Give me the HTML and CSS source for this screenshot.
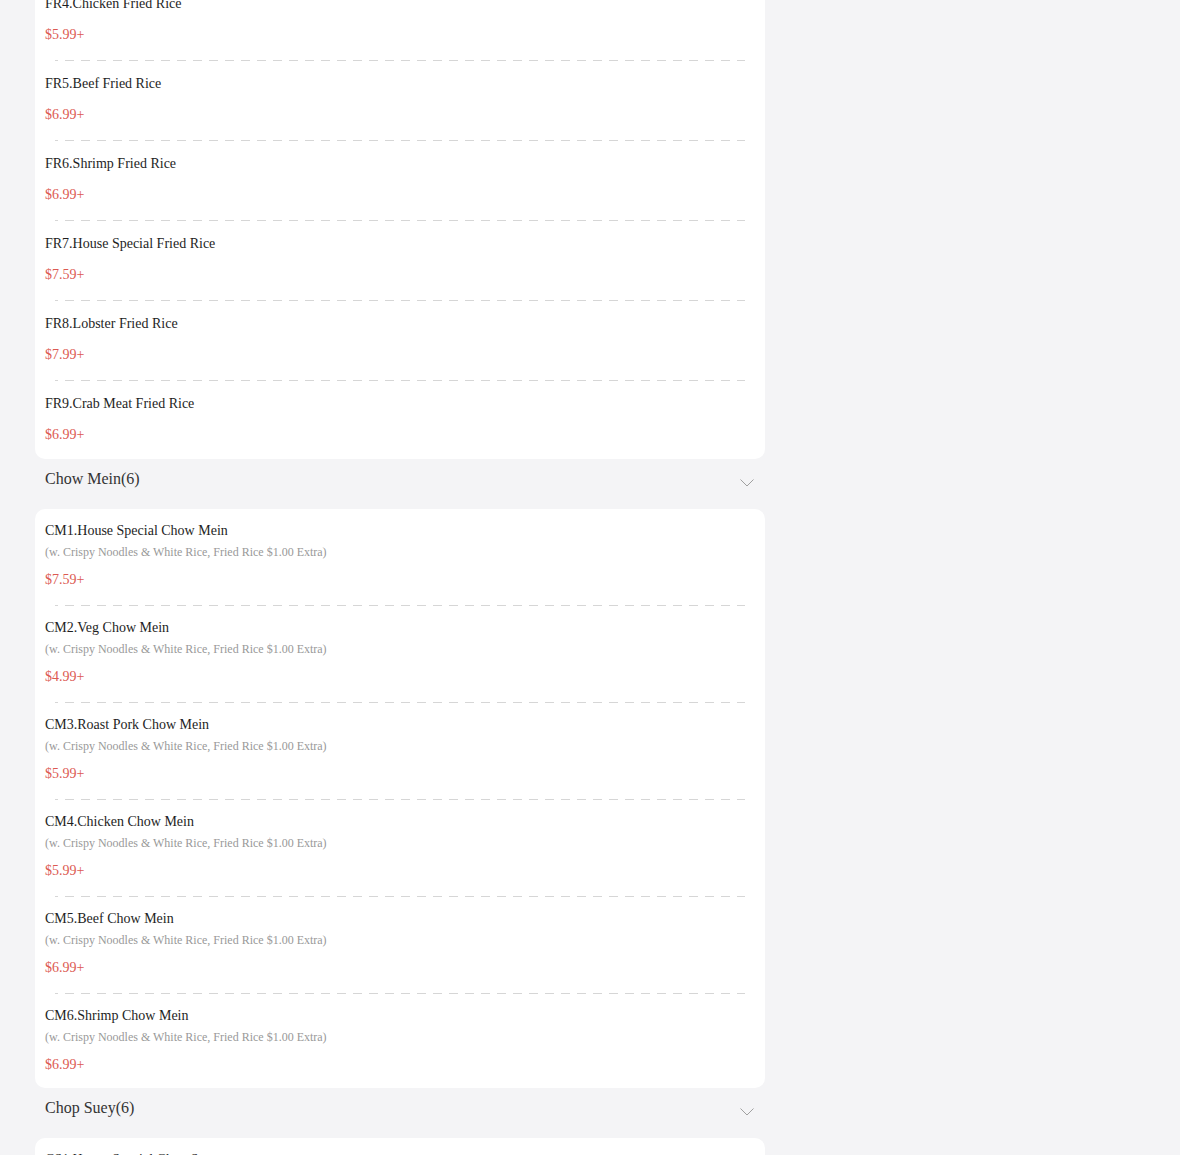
FILE: index.html
```html
<!DOCTYPE html>
<html lang="en">
<head>
<meta charset="utf-8">
<title>Menu</title>
<link rel="stylesheet" href="styles.css">
</head>
<body>
<main class="menu">
  <section class="card card-first">
    <div class="item"><div class="name">FR4.Chicken Fried Rice</div><div class="price">$5.99+</div></div>
    <div class="sep"></div>
    <div class="item"><div class="name">FR5.Beef Fried Rice</div><div class="price">$6.99+</div></div>
    <div class="sep"></div>
    <div class="item"><div class="name">FR6.Shrimp Fried Rice</div><div class="price">$6.99+</div></div>
    <div class="sep"></div>
    <div class="item"><div class="name">FR7.House Special Fried Rice</div><div class="price">$7.59+</div></div>
    <div class="sep"></div>
    <div class="item"><div class="name">FR8.Lobster Fried Rice</div><div class="price">$7.99+</div></div>
    <div class="sep"></div>
    <div class="item"><div class="name">FR9.Crab Meat Fried Rice</div><div class="price">$6.99+</div></div>
  </section>

  <div class="cat">
    <span class="cat-title">Chow Mein(6)</span>
    <svg class="chev" width="14" height="8" viewBox="0 0 14 8"><polyline points="0.5,0.5 7,7 13.5,0.5" fill="none" stroke="#a0a0a0" stroke-width="1"/></svg>
  </div>

  <section class="card">
    <div class="item desc-item"><div class="name">CM1.House Special Chow Mein</div><div class="desc">(w. Crispy Noodles &amp; White Rice, Fried Rice $1.00 Extra)</div><div class="price">$7.59+</div></div>
    <div class="sep"></div>
    <div class="item desc-item"><div class="name">CM2.Veg Chow Mein</div><div class="desc">(w. Crispy Noodles &amp; White Rice, Fried Rice $1.00 Extra)</div><div class="price">$4.99+</div></div>
    <div class="sep"></div>
    <div class="item desc-item"><div class="name">CM3.Roast Pork Chow Mein</div><div class="desc">(w. Crispy Noodles &amp; White Rice, Fried Rice $1.00 Extra)</div><div class="price">$5.99+</div></div>
    <div class="sep"></div>
    <div class="item desc-item"><div class="name">CM4.Chicken Chow Mein</div><div class="desc">(w. Crispy Noodles &amp; White Rice, Fried Rice $1.00 Extra)</div><div class="price">$5.99+</div></div>
    <div class="sep"></div>
    <div class="item desc-item"><div class="name">CM5.Beef Chow Mein</div><div class="desc">(w. Crispy Noodles &amp; White Rice, Fried Rice $1.00 Extra)</div><div class="price">$6.99+</div></div>
    <div class="sep"></div>
    <div class="item desc-item"><div class="name">CM6.Shrimp Chow Mein</div><div class="desc">(w. Crispy Noodles &amp; White Rice, Fried Rice $1.00 Extra)</div><div class="price">$6.99+</div></div>
  </section>

  <div class="cat">
    <span class="cat-title">Chop Suey(6)</span>
    <svg class="chev" width="14" height="8" viewBox="0 0 14 8"><polyline points="0.5,0.5 7,7 13.5,0.5" fill="none" stroke="#a0a0a0" stroke-width="1"/></svg>
  </div>

  <section class="card">
    <div class="item desc-item"><div class="name">CS1.House Special Chop Suey</div><div class="desc">(w. White Rice, Fried Rice $1.00 Extra)</div><div class="price">$7.59+</div></div>
    <div class="sep"></div>
    <div class="item desc-item"><div class="name">CS2.Veg Chop Suey</div><div class="desc">(w. White Rice, Fried Rice $1.00 Extra)</div><div class="price">$4.99+</div></div>
  </section>
</main>
</body>
</html>
```

FILE: styles.css
```css
html, body {
  margin: 0;
  padding: 0;
  background: #f4f4f6;
}

body {
  font-family: "Liberation Serif", "Times New Roman", serif;
  color: #333;
  overflow: hidden;
}

.menu {
  width: 730px;
  padding: 0 35px;
  display: flex;
  flex-direction: column;
}

.card {
  background: #fff;
  border-radius: 10px;
}

.card-first {
  margin-top: -19px;
  border-top-left-radius: 0;
  border-top-right-radius: 0;
}

.item {
  padding: 12px 10px 14px;
  display: flex;
  flex-direction: column;
}

.card > .item:last-child {
  padding-bottom: 13px;
}

.name {
  font-size: 14px;
  line-height: 22px;
  color: #1e1e1e;
}

.price {
  font-size: 14px;
  line-height: 22px;
  color: #dc5a52;
  margin-top: 9px;
}

.desc {
  font-size: 12px;
  line-height: 20px;
  color: #999;
}

.desc-item {
  padding-top: 11px;
}

.desc-item .price {
  margin-top: 7px;
}

.card > .desc-item:last-child {
  padding-bottom: 12px;
}

.sep {
  height: 1px;
  margin: 0 20px;
  background-image: repeating-linear-gradient(to right, #d6d6d6 0 9px, transparent 9px 16px);
  background-position: -6px 0;
}

.cat {
  height: 50px;
  box-sizing: border-box;
  padding: 11px 11px 0 10px;
  display: flex;
  justify-content: space-between;
  align-items: flex-start;
}

.cat-title {
  font-size: 16px;
  line-height: 18px;
  color: #333;
}

.chev {
  margin-top: 9px;
  display: block;
}
```
